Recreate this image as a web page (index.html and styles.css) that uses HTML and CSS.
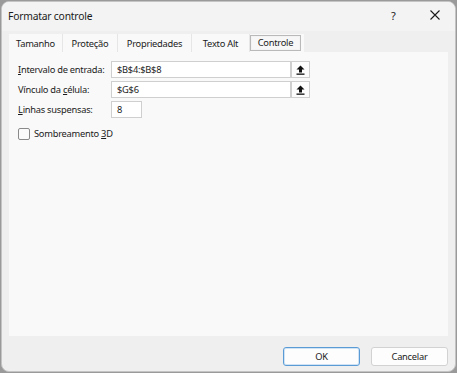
FILE: index.html
```html
<!DOCTYPE html>
<html lang="pt-BR">
<head>
<meta charset="utf-8">
<title>Formatar controle</title>
<link rel="stylesheet" href="styles.css">
</head>
<body>
<div class="window">
  <div class="titlebar">
    <span class="title">Formatar controle</span>
    <span class="help">?</span>
    <svg class="close" width="10" height="10" viewBox="0 0 10 10"><path d="M0.5 0.5 L9.5 9.5 M9.5 0.5 L0.5 9.5" stroke="#1a1a1a" stroke-width="1.1" fill="none"/></svg>
  </div>
  <div class="tabs">
    <div class="tab t1">Tamanho</div>
    <div class="tab t2">Proteção</div>
    <div class="tab t3">Propriedades</div>
    <div class="tab t4">Texto Alt</div>
    <div class="tab t5"><span class="active">Controle</span></div>
  </div>
  <div class="panel">
    <div class="row">
      <label class="lbl"><u>I</u>ntervalo de entrada:</label>
      <div class="field wide">$B$4:$B$8</div>
      <div class="pick"><svg width="9" height="10" viewBox="0 0 9 10"><path d="M4.5 0.5 L8.5 4.5 L6 4.5 L6 7.5 L3 7.5 L3 4.5 L0.5 4.5 Z" fill="#111"/><rect x="0.5" y="8.5" width="8" height="1.3" fill="#111"/></svg></div>
    </div>
    <div class="row">
      <label class="lbl">Vínculo da <u>c</u>élula:</label>
      <div class="field wide">$G$6</div>
      <div class="pick"><svg width="9" height="10" viewBox="0 0 9 10"><path d="M4.5 0.5 L8.5 4.5 L6 4.5 L6 7.5 L3 7.5 L3 4.5 L0.5 4.5 Z" fill="#111"/><rect x="0.5" y="8.5" width="8" height="1.3" fill="#111"/></svg></div>
    </div>
    <div class="row">
      <label class="lbl"><u>L</u>inhas suspensas:</label>
      <div class="field small">8</div>
    </div>
    <div class="check">
      <span class="box"></span>
      <span>Sombreamento <u>3</u>D</span>
    </div>
  </div>
  <div class="footer">
    <button class="btn ok">OK</button>
    <button class="btn">Cancelar</button>
  </div>
</div>
</body>
</html>
```
FILE: styles.css
```css
html, body {
  margin: 0;
  padding: 0;
  background: #9a9a9a;
}
body {
  width: 457px;
  height: 373px;
  overflow: hidden;
  font-family: "Noto Sans", "Open Sans", sans-serif;
  color: #1b1b1b;
  letter-spacing: -0.25px;
}
.window {
  margin: 1px;
  width: 453px;
  height: 369px;
  border: 1px solid #c4c4c4;
  border-radius: 8px;
  background: #efefef;
  display: flex;
  flex-direction: column;
  overflow: hidden;
}
.titlebar {
  height: 29px;
  background: #f3f3f3;
  display: flex;
  align-items: center;
  padding: 0 0 0 6px;
}
.title {
  font-size: 10.3px;
  flex: 1;
  margin-top: -1px;
  letter-spacing: -0.2px;
}
.help {
  font-size: 11px;
  width: 10px;
  margin-right: 29px;
  margin-top: -2px;
}
.close {
  margin-right: 15px;
  margin-top: -3px;
}
.tabs {
  margin: 3px 0 0 7px;
  height: 18px;
  width: 295px;
  background: #f9f9f9;
  display: flex;
  font-size: 9.3px;
}
.tab {
  display: flex;
  align-items: center;
  justify-content: center;
  border-right: 1px solid #e6e6e6;
  box-sizing: border-box;
}
.t1 { width: 54px; }
.t2 { width: 55px; }
.t3 { width: 74px; }
.t4 { width: 58px; }
.t5 { width: 54px; border-right: none; justify-content: flex-start; }
.active {
  display: flex;
  align-items: center;
  justify-content: center;
  width: 51px;
  height: 16px;
  margin-top: -1px;
  border: 1px solid #b9b9b9;
  box-shadow: inset 0 0 0 1px #f3f3f3;
  background: #f7f7f7;
  box-sizing: border-box;
}
.panel {
  margin: 0 7px 0 7px;
  height: 284px;
  background: #f9f9f9;
  padding: 9px 0 0 9px;
  box-sizing: border-box;
  font-size: 9.3px;
}
.row {
  display: flex;
  align-items: center;
  height: 17px;
  margin-bottom: 3px;
}
.lbl {
  width: 93px;
}
.field {
  height: 17px;
  box-sizing: border-box;
  border: 1px solid #cfcfcf;
  background: #fff;
  display: flex;
  align-items: center;
  padding-left: 5px;
}
.wide { width: 180px; }
.small { width: 31px; }
.pick {
  width: 19px;
  height: 17px;
  box-sizing: border-box;
  border: 1px solid #cfcfcf;
  background: #fdfdfd;
  display: flex;
  align-items: center;
  justify-content: center;
}
.check {
  display: flex;
  align-items: center;
  margin-top: 9px;
  gap: 4px;
}
.box {
  width: 12px;
  height: 12px;
  border: 1px solid #8a8a8a;
  border-radius: 2px;
  background: #fbfbfb;
  box-sizing: border-box;
}
.footer {
  display: flex;
  justify-content: flex-end;
  gap: 11px;
  padding: 11px 7px 0 0;
}
.btn {
  width: 77px;
  height: 19px;
  font-family: inherit;
  font-size: 9.3px;
  letter-spacing: -0.25px;
  color: #1b1b1b;
  background: #fdfdfd;
  border: 1px solid #d2d2d2;
  border-radius: 3px;
  padding: 0;
}
.ok {
  border: 1px solid #5b9bd5;
  box-shadow: inset 0 0 0 1px #cfe3f5;
}
```
